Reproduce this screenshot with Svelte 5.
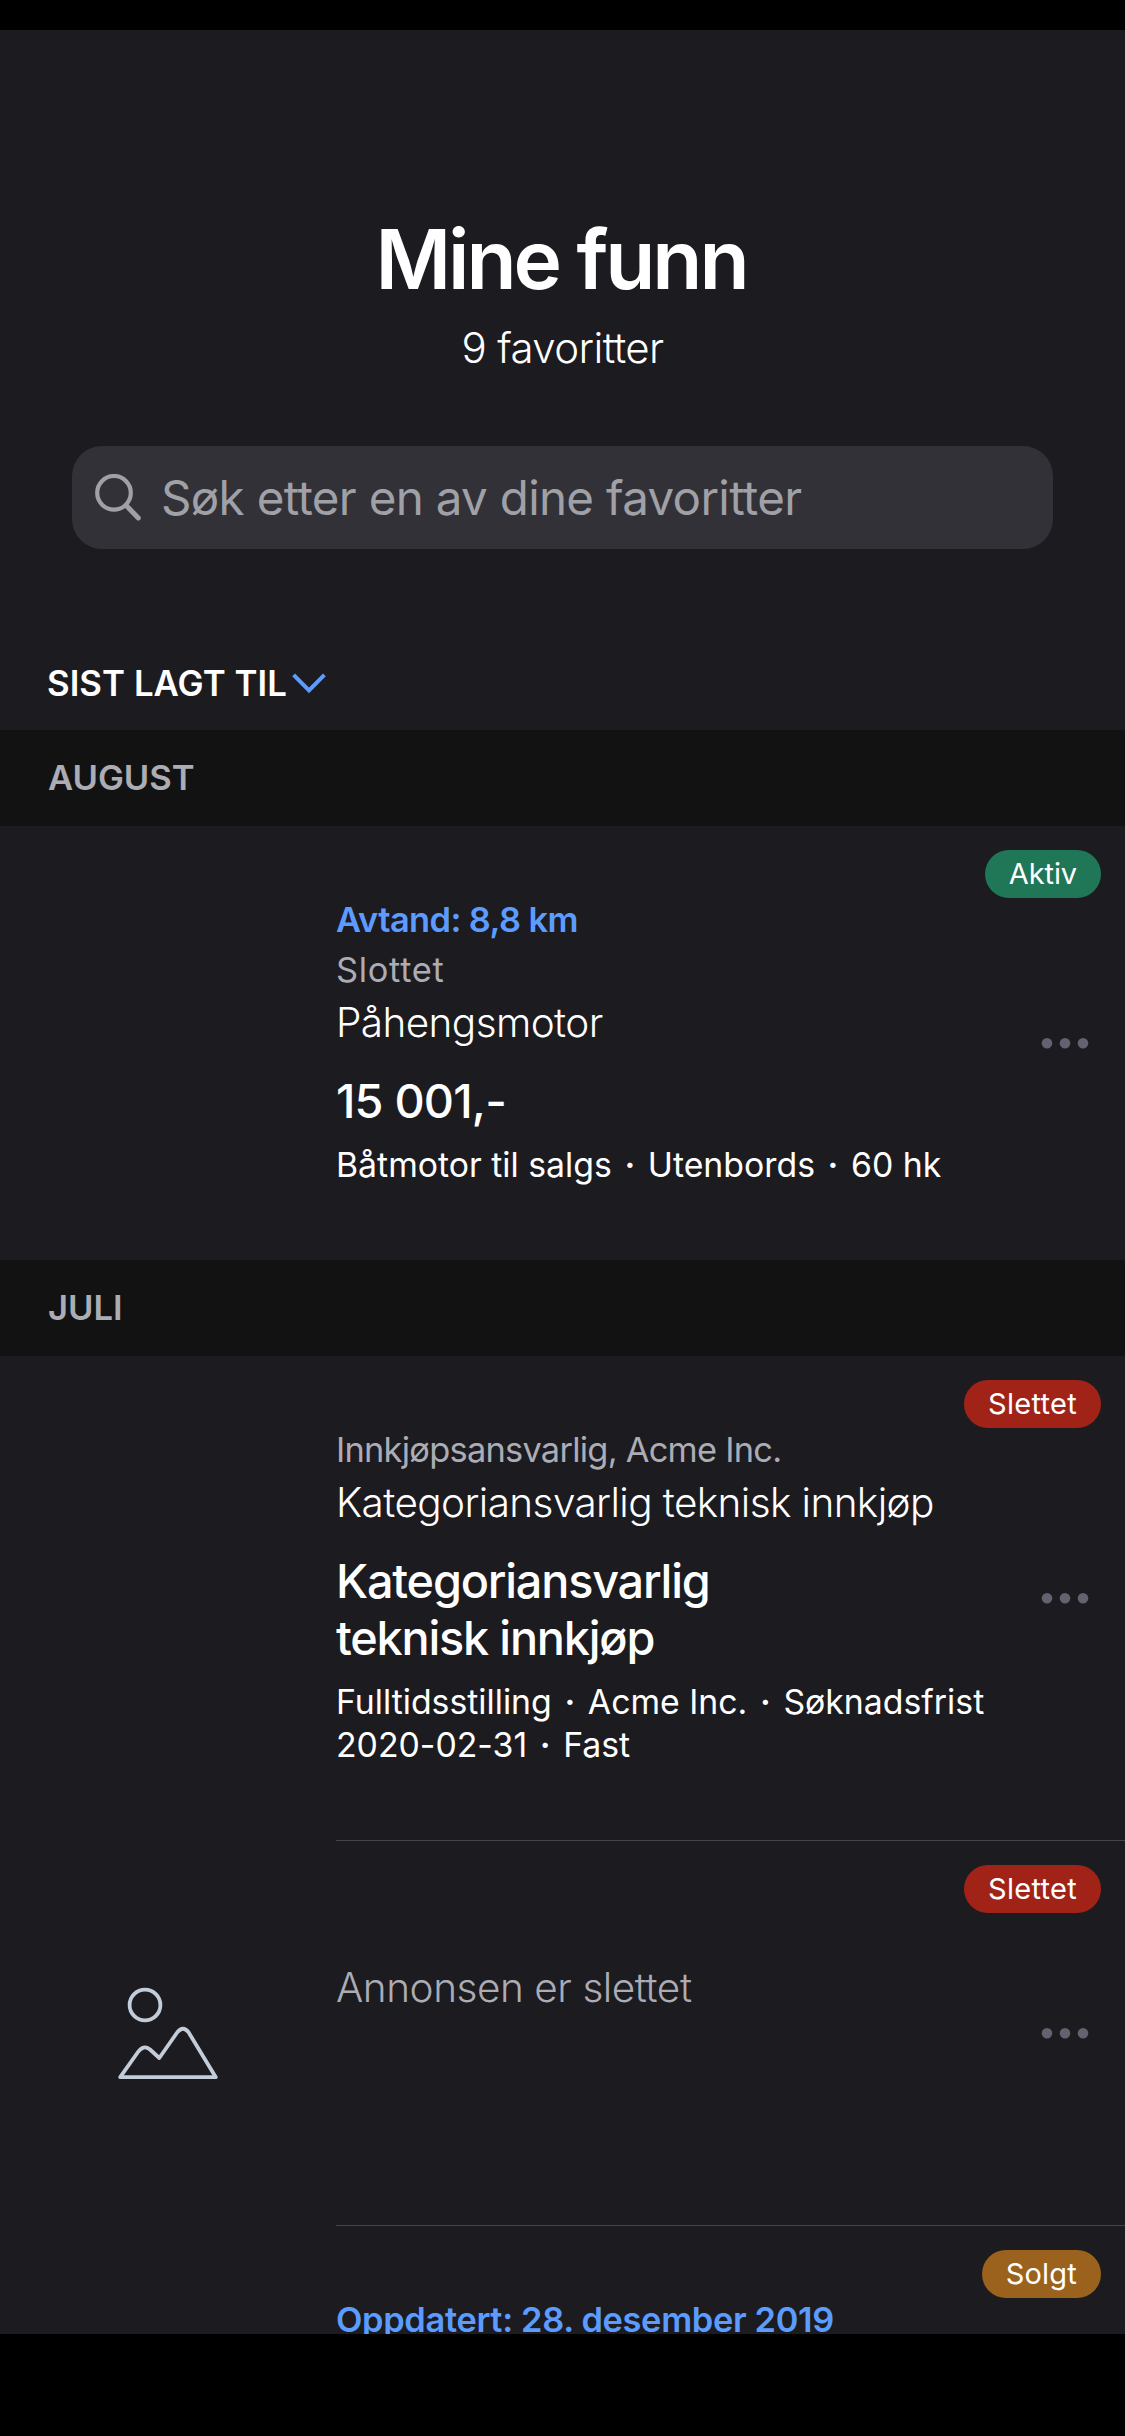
<script>
  const sections = [
    {
      month: 'August',
      items: [
        {
          status: 'Aktiv', tone: 'active',
          highlight: 'Avtand: 8,8 km', meta: 'Slottet', metaWide: true,
          title: 'Påhengsmotor', lead: '15 001,-', numeric: true,
          details: ['Båtmotor til salgs', 'Utenbords', '60 hk']
        }
      ]
    },
    {
      month: 'Juli',
      items: [
        {
          status: 'Slettet', tone: 'deleted',
          meta: 'Innkjøpsansvarlig, Acme Inc.',
          title: 'Kategoriansvarlig teknisk innkjøp',
          lead: 'Kategoriansvarlig teknisk innkjøp',
          details: ['Fulltidsstilling', 'Acme Inc.', 'Søknadsfrist 2020-02-31', 'Fast']
        },
        { status: 'Slettet', tone: 'deleted', placeholder: true, removed: 'Annonsen er slettet' },
        { status: 'Solgt', tone: 'sold', highlight: 'Oppdatert: 28. desember 2019', last: true }
      ]
    }
  ];
</script>

<div class="screen">
  <div class="status-bar"></div>
  <main>
    <header>
      <h1>Mine funn</h1>
      <p class="count">9 favoritter</p>
      <div class="search">
        <svg width="46" height="47" viewBox="0 0 46 47" fill="none" stroke="currentColor" stroke-linecap="round">
          <circle cx="19" cy="18.8" r="16.8" stroke-width="4.2" />
          <path d="M31.2 31.5 43.3 43.9" stroke-width="5" />
        </svg>
        <span>Søk etter en av dine favoritter</span>
      </div>
      <div class="sort">
        <span>SIST LAGT TIL</span>
        <svg width="34" height="22" viewBox="0 0 34 22" fill="none" stroke="#5c9cff" stroke-width="4">
          <path d="M1.6 2.9 17 18.3 32.4 2.9" />
        </svg>
      </div>
    </header>

    {#each sections as section}
      <h2>{section.month}</h2>
      {#each section.items as item, n}
        <article class:end={n === section.items.length - 1}>
          <div class="thumb">
            {#if item.placeholder}
              <svg width="100" height="94" viewBox="0 0 100 94" fill="none" stroke="#c3ccd9" stroke-width="3.8" stroke-linejoin="round">
                <circle cx="27" cy="18" r="15.4" />
                <path d="M2.2 90.2 20 65Q25.3 57.3 32 62.5L41.3 71 59.5 45Q65 38.5 70.4 45L97.8 90.2Z" />
              </svg>
            {/if}
          </div>
          <div class="body">
            <div class="text" class:removed={item.removed}>
              {#if item.highlight}<p class="highlight" class:date={item.last}>{item.highlight}</p>{/if}
              {#if item.meta}<p class="meta" class:wide={item.metaWide}>{item.meta}</p>{/if}
              {#if item.title}<p class="title">{item.title}</p>{/if}
              {#if item.lead}<p class="lead" class:numeric={item.numeric}>{item.lead}</p>{/if}
              {#if item.details}
                <p class="details">
                  {#each item.details as part, i}{#if i > 0}{' '}<span class="dot">·</span>{' '}{/if}{part}{/each}
                </p>
              {/if}
              {#if item.removed}<p class="title muted">{item.removed}</p>{/if}
            </div>
            {#if !item.last}
              <svg class="more" width="48" height="12" viewBox="0 0 48 12" fill="#626270">
                <circle cx="6" cy="6.3" r="5.3" /><circle cx="24" cy="6.3" r="5.3" /><circle cx="42" cy="6.3" r="5.3" />
              </svg>
            {/if}
            <span class="badge {item.tone}">{item.status}</span>
          </div>
        </article>
      {/each}
    {/each}
  </main>
</div>

<style>
  :global(body) { background: #000; }
  .screen {
    width: 1125px; height: 2436px; background: #000; color: #fff;
    font-family: Inter, 'Liberation Sans', sans-serif; overflow: hidden;
    font-variant-ligatures: none;
  }
  .status-bar { height: 30px; }
  main { height: 2304px; overflow: hidden; background: #1c1b20; }
  h1, h2, p { margin: 0; }
  svg { display: block; flex: none; }
  header { height: 700px; box-sizing: border-box; padding-top: 180px; }
  h1 {
    font-size: 82px; line-height: 100px; font-weight: 600; letter-spacing: -3.1px;
    padding-right: 3px; text-align: center;
  }
  .count { margin-top: 13px; font-size: 42px; line-height: 50px; font-weight: 300; letter-spacing: -0.6px; text-align: center; }
  .search {
    display: flex; align-items: center; gap: 20px; box-sizing: border-box;
    height: 103px; margin: 73px 72px 0; padding-left: 23px;
    border-radius: 30px; background: #323137; color: #a0a0a7;
    font-size: 47.5px; letter-spacing: -0.68px; white-space: nowrap;
  }
  .sort {
    display: flex; align-items: center; gap: 5px; margin: 109px 0 0 47px;
    font-size: 34.8px; line-height: 50px; font-weight: 600; letter-spacing: 0.05px;
  }
  h2 {
    height: 96px; box-sizing: border-box; padding: 0 0 0 48px;
    background: #121212; color: #acacb5; text-transform: uppercase;
    font-size: 34.6px; line-height: 95px; font-weight: 600; letter-spacing: 0;
  }
  article { display: flex; }
  .thumb { width: 336px; flex: none; display: flex; align-items: center; justify-content: center; }
  .body {
    position: relative; flex: 1; display: flex; align-items: center; justify-content: space-between;
    box-sizing: border-box; padding-right: 36px; border-bottom: 1px solid #45444a;
  }
  .end .body { border-bottom: 0; }
  .text { width: 670px; padding: 69px 0 74px; }
  .highlight, .meta { font-size: 34.4px; line-height: 50px; }
  .highlight { color: #5c9cff; font-weight: 600; letter-spacing: -0.6px; }
  .highlight.date { letter-spacing: -0.33px; }
  .meta { color: #acacb5; font-weight: 400; letter-spacing: -0.75px; }
  .meta.wide { letter-spacing: 0.7px; }
  .title { font-size: 40.5px; line-height: 56px; font-weight: 300; letter-spacing: -0.6px; }
  .lead { width: 460px; margin-top: 22px; font-size: 46.8px; line-height: 57px; font-weight: 550; letter-spacing: -1.2px; }
  .lead.numeric { letter-spacing: -0.8px; }
  .details { margin-top: 13px; font-size: 33.8px; line-height: 43px; letter-spacing: 0; }
  .dot { display: inline-block; width: 17px; text-align: center; font-weight: 600; }
  .text.removed { padding: 119px 0 209px; }
  .muted { color: #acacb5; letter-spacing: -0.45px; }
  .badge {
    position: absolute; top: 24px; right: 24px; height: 48px; line-height: 47px; padding: 0 24px;
    border-radius: 24px; font-size: 29px;
  }
  .active { background: #1f7757; letter-spacing: -0.1px; }
  .deleted { background: #a12318; letter-spacing: 0.3px; }
  .sold { background: #9a621d; letter-spacing: 0.2px; }
</style>
